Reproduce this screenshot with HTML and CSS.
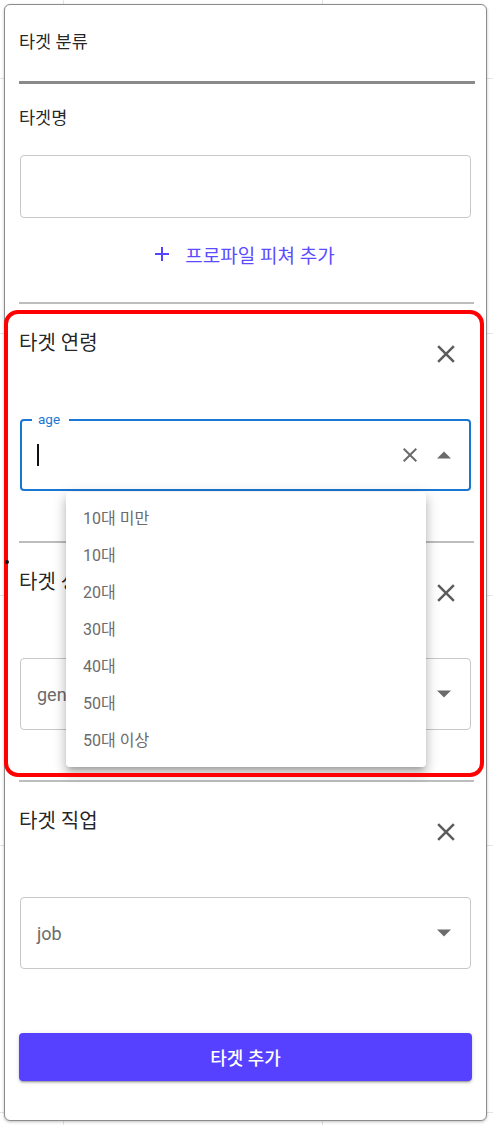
FILE: index.html
```html
<!DOCTYPE html>
<html lang="ko">
<head>
<meta charset="utf-8">
<title>타겟 분류</title>
<link rel="stylesheet" href="styles.css">
</head>
<body>
<div class="card">
  <div class="cat-title">타겟 분류</div>
  <div class="thick-bar"></div>
  <div class="field-label">타겟명</div>
  <div class="text-input"></div>
  <div class="add-feature">
    <svg class="plus" width="24" height="24" viewBox="0 0 24 24"><path d="M19 13h-6v6h-2v-6H5v-2h6V5h2v6h6v2z"/></svg>
    <span>프로파일 피쳐 추가</span>
  </div>

  <div class="divider"></div>
  <section class="feature">
    <div class="feature-head">
      <h3 class="feature-title">타겟 연령</h3>
      <button class="close-btn" aria-label="닫기"><svg width="30" height="30" viewBox="0 0 24 24"><path d="M19 6.41 17.59 5 12 10.59 6.41 5 5 6.41 10.59 12 5 17.59 6.41 19 12 13.41 17.59 19 19 17.59 13.41 12z"/></svg></button>
    </div>
    <div class="select focused">
      <span class="float-label">age</span>
      <span class="caret"></span>
      <span class="end-icons">
        <svg class="clear" width="24" height="24" viewBox="0 0 24 24"><path d="M19 6.41 17.59 5 12 10.59 6.41 5 5 6.41 10.59 12 5 17.59 6.41 19 12 13.41 17.59 19 19 17.59 13.41 12z"/></svg>
        <svg class="arrow" width="24" height="24" viewBox="0 0 24 24"><path d="M5 15.5l7-7 7 7z"/></svg>
      </span>
      <ul class="menu">
        <li>10대 미만</li>
        <li>10대</li>
        <li>20대</li>
        <li>30대</li>
        <li>40대</li>
        <li>50대</li>
        <li>50대 이상</li>
      </ul>
    </div>
  </section>

  <div class="divider"></div>
  <section class="feature">
    <div class="feature-head">
      <h3 class="feature-title">타겟 성별</h3>
      <button class="close-btn" aria-label="닫기"><svg width="30" height="30" viewBox="0 0 24 24"><path d="M19 6.41 17.59 5 12 10.59 6.41 5 5 6.41 10.59 12 5 17.59 6.41 19 12 13.41 17.59 19 19 17.59 13.41 12z"/></svg></button>
    </div>
    <div class="select">
      <span class="placeholder">gender</span>
      <span class="end-icons">
        <svg class="arrow" width="24" height="24" viewBox="0 0 24 24"><path d="M5 8.5l7 7 7-7z"/></svg>
      </span>
    </div>
  </section>

  <div class="divider"></div>
  <section class="feature">
    <div class="feature-head">
      <h3 class="feature-title">타겟 직업</h3>
      <button class="close-btn" aria-label="닫기"><svg width="30" height="30" viewBox="0 0 24 24"><path d="M19 6.41 17.59 5 12 10.59 6.41 5 5 6.41 10.59 12 5 17.59 6.41 19 12 13.41 17.59 19 19 17.59 13.41 12z"/></svg></button>
    </div>
    <div class="select">
      <span class="placeholder">job</span>
      <span class="end-icons">
        <svg class="arrow" width="24" height="24" viewBox="0 0 24 24"><path d="M5 8.5l7 7 7-7z"/></svg>
      </span>
    </div>
  </section>

  <button class="submit">타겟 추가</button>
</div>
<div class="annotation"></div>
<div class="dot"></div>
</body>
</html>
```

FILE: styles.css
```css
html {
  background-color: #fff;
  background-image:
    linear-gradient(#e4e4e4, #e4e4e4),
    linear-gradient(#e4e4e4, #e4e4e4),
    linear-gradient(#e4e4e4, #e4e4e4),
    linear-gradient(#e4e4e4, #e4e4e4),
    linear-gradient(#e4e4e4, #e4e4e4),
    linear-gradient(#e4e4e4, #e4e4e4),
    linear-gradient(#e4e4e4, #e4e4e4);
  background-repeat: no-repeat;
  background-size: 1px 100%, 1px 100%, 100% 1px, 100% 1px, 100% 1px, 100% 1px, 100% 1px;
  background-position: 63px 0, 322px 0, 0 78px, 0 333px, 0 595px, 0 845px, 0 1112px;
}

body {
  margin: 0;
  padding: 4px 6px 4px 4px;
  position: relative;
  font-family: Roboto, "Noto Sans CJK KR", sans-serif;
  color: rgba(0, 0, 0, 0.87);
}

.card {
  background: #fff;
  border: 1px solid #8c8c8c;
  border-radius: 6px;
  box-shadow: 0 1px 3px rgba(0, 0, 0, 0.25);
  padding: 0 14px 39px 14px;
}

.cat-title {
  padding-top: 25px;
  font-size: 17.5px;
  line-height: 24px;
}

.thick-bar {
  margin-top: 27px;
  margin-right: -3px;
  height: 3px;
  background: #8a8a8a;
}

.field-label {
  margin-top: 22px;
  font-size: 17.5px;
  line-height: 24px;
}

.text-input {
  margin: 25px 1px 0;
  height: 63px;
  box-sizing: border-box;
  border: 1px solid #c8c8c8;
  border-radius: 4px;
}

.add-feature {
  margin-top: 21px;
  height: 30px;
  display: flex;
  align-items: center;
  justify-content: center;
  gap: 11px;
  color: #5b4cff;
  font-size: 19px;
}

.plus {
  fill: #5443ff;
  margin-left: -6px;
}

.divider {
  margin-top: 50px;
  margin-right: -2px;
  height: 2px;
  background: #bdbdbd;
}

.add-feature + .divider {
  margin-top: 33px;
}

.feature {
  padding-top: 24px;
}

.feature-head {
  display: flex;
  justify-content: space-between;
  align-items: flex-start;
  padding-right: 6px;
}

.feature-title {
  margin: 0;
  font-size: 20px;
  font-weight: 400;
  line-height: 30px;
}

.close-btn {
  margin-top: 6px;
  width: 40px;
  height: 40px;
  padding: 0;
  border: none;
  background: none;
  display: flex;
  align-items: center;
  justify-content: center;
  fill: #5c5c5c;
}

.select {
  position: relative;
  margin: 45px 1px 0;
  height: 72px;
  box-sizing: border-box;
  border: 1px solid #c8c8c8;
  border-radius: 4px;
  display: flex;
  align-items: center;
  padding: 0 14px 0 16px;
}

.select.focused {
  border: 2px solid #1976d2;
  padding: 0 13px 0 15px;
}

.placeholder {
  font-size: 18px;
  color: #6b6b6b;
}

.float-label {
  position: absolute;
  left: 10px;
  top: -9px;
  padding: 0 9px 0 6px;
  background: #fff;
  font-size: 13.5px;
  line-height: 14px;
  color: #1976d2;
}

.caret {
  width: 1.5px;
  height: 22px;
  background: #111;
}

.end-icons {
  margin-left: auto;
  display: flex;
  align-items: center;
  gap: 10px;
}

.clear {
  fill: #6b6b6b;
}

.arrow {
  fill: #6b6b6b;
}

.menu {
  position: absolute;
  top: calc(100% + 3px);
  left: 44px;
  width: 360px;
  margin: 0;
  padding: 8px 0;
  list-style: none;
  background: #fff;
  border-radius: 4px;
  box-shadow: 0 5px 5px -3px rgba(0, 0, 0, 0.2), 0 8px 10px 1px rgba(0, 0, 0, 0.14), 0 3px 14px 2px rgba(0, 0, 0, 0.12);
  z-index: 5;
}

.menu li {
  height: 37px;
  line-height: 37px;
  padding-left: 17px;
  font-size: 16px;
  color: #6b6b6b;
}

.submit {
  display: block;
  width: 453px;
  margin-top: 64px;
  height: 48px;
  border: none;
  border-radius: 4px;
  background: #5541ff;
  color: #fff;
  font-family: Roboto, "Noto Sans CJK KR", sans-serif;
  font-size: 18px;
  font-weight: 500;
  box-shadow: 0 3px 1px -2px rgba(0, 0, 0, 0.2), 0 2px 2px 0 rgba(0, 0, 0, 0.14), 0 1px 5px 0 rgba(0, 0, 0, 0.12);
}

.annotation {
  position: absolute;
  left: 4px;
  top: 310px;
  width: 480px;
  height: 467px;
  box-sizing: border-box;
  border: 4px solid #ff0000;
  border-radius: 14px;
  z-index: 10;
  pointer-events: none;
}

.dot {
  position: absolute;
  left: 5px;
  top: 560px;
  width: 4px;
  height: 4px;
  border-radius: 50%;
  background: #111;
  z-index: 11;
}
```
